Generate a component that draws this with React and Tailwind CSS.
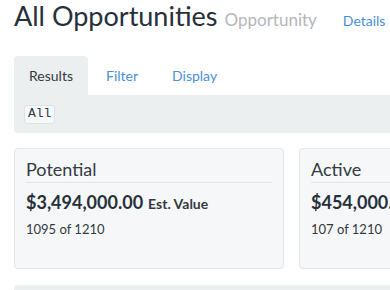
export default function App() {
  const cards = [
    { title: "Potential", value: "$3,494,000.00", count: "1095 of 1210" },
    { title: "Active", value: "$454,000.00", count: "107 of 1210" },
  ];

  return (
    <div className="w-[390px] h-[290px] overflow-hidden bg-white font-['Lato',sans-serif] text-[#2b3440]">
      <div className="w-[800px] px-[14px]">
        {/* Header */}
        <div className="flex items-baseline h-[34px]">
          <h1 className="text-[27px] leading-[31px] text-[#26303b]">All Opportunities</h1>
          <span className="ml-[7px] text-[17px] text-[#b3b7bb]">Opportunity</span>
          <a className="ml-[26px] text-[14px] text-[#4a8fdb]">Details</a>
        </div>

        {/* Tabs */}
        <div className="mt-[22px] flex text-[14px]">
          <div className="w-[74px] h-[39px] flex items-center justify-center rounded-t-[4px] bg-[#eceff0] text-[#333a42]">
            Results
          </div>
          <div className="h-[39px] flex items-center ml-[18px] text-[#4a8fdb]">Filter</div>
          <div className="h-[39px] flex items-center ml-[34px] text-[#4a8fdb]">Display</div>
        </div>
        <div className="h-[38px] bg-[#eceff0] rounded-b-[4px] flex items-center px-[10px]">
          <span className="h-[19px] px-[3px] flex items-center rounded-[3px] border border-[#dde2e5] bg-[#f6f8f9] font-['Liberation_Mono',monospace] text-[13px] text-[#333a42]">
            All
          </span>
        </div>

        {/* Cards */}
        <div className="mt-[15px] flex gap-[15px]">
          {cards.map((c) => (
            <div
              key={c.title}
              className="w-[270px] h-[121px] rounded-[4px] border border-[#e3e6e8] bg-[#f6f7f8] px-[11px] pt-[8px]"
            >
              <div className="text-[18px] leading-[24px] border-b border-[#e3e6e8] pb-[1px] text-[#333a42]">
                {c.title}
              </div>
              <div className="mt-[7px] flex items-baseline font-bold">
                <span className="text-[18px] leading-[24px] text-[#26303b]">{c.value}</span>
                <span className="ml-[5px] text-[14px] text-[#333a42]">Est. Value</span>
              </div>
              <div className="mt-[6px] text-[13px] leading-[18px] text-[#333a42]">{c.count}</div>
            </div>
          ))}
        </div>

        <div className="mt-[16px] h-[20px] rounded-t-[4px] bg-[#eceff0]" />
      </div>
    </div>
  );
}
